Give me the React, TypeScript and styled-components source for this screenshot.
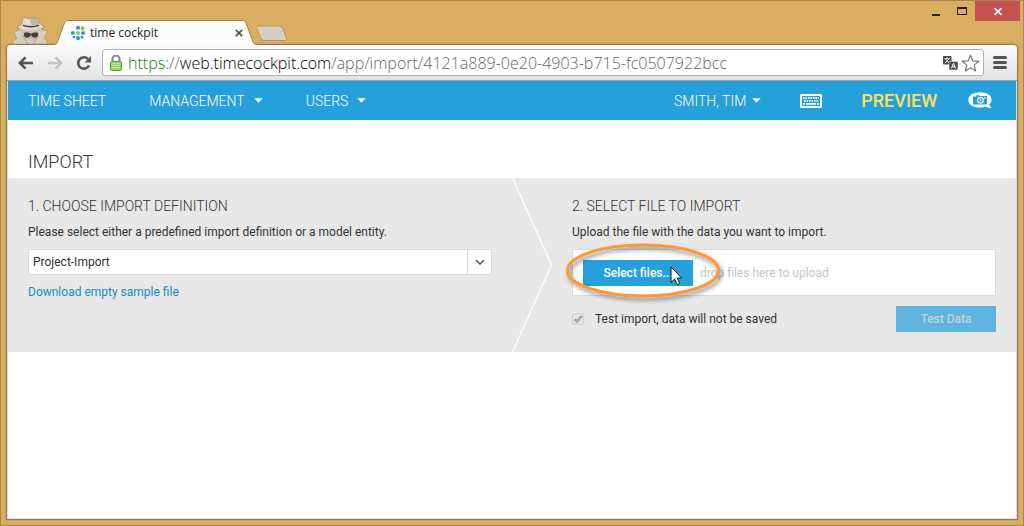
import React from "react";
import styled, { createGlobalStyle } from "styled-components";

const GlobalStyle = createGlobalStyle`
  *, *::before, *::after { box-sizing: border-box; }
  body {
    margin: 0;
    background: #d9ae63;
    font-family: Roboto, "Liberation Sans", sans-serif;
    font-size: 12px;
    line-height: 16px;
    color: #333;
  }
  button, select, input { font: inherit; }
  h1, h2, p { margin: 0; }
`;

const blue = "#26a0da";

const BrowserWindow = styled.div`
  display: flex;
  flex-direction: column;
  min-height: 100vh;
  border: 1px solid #a78650;
  background: #d9ae63;
`;

const TabStrip = styled.header`
  display: flex;
  align-items: flex-end;
  height: 44px;
  padding: 0 3px 0 11px;
`;

const Spy = styled.svg`
  display: block;
  flex: none;
  margin-right: 6px;
`;

const Tab = styled.div`
  position: relative;
  z-index: 1;
  display: flex;
  flex: none;
  align-items: center;
  width: 203px;
  height: 25px;
  padding: 0 14px 0 17px;
  font-family: "Open Sans", "Noto Sans", sans-serif;
  color: #222;
`;

const TabShape = styled.svg`
  position: absolute;
  inset: 0;
  z-index: -1;
`;

const TabTitle = styled.span`
  flex: 1;
  padding-left: 5px;
`;

const PlainButton = styled.button`
  display: flex;
  flex: none;
  align-items: center;
  justify-content: center;
  padding: 0;
  border: 0;
  background: none;
  color: inherit;
`;

const NewTab = styled(PlainButton)`
  margin-bottom: 3px;
`;

const WindowControls = styled.div`
  display: flex;
  align-self: flex-start;
  margin-left: auto;
`;

const ControlButton = styled(PlainButton)<{ $close?: boolean }>`
  width: ${(p) => (p.$close ? 45 : 26)}px;
  height: 20px;
  background: ${(p) => (p.$close ? "#c75050" : "transparent")};
`;

const Client = styled.div`
  display: flex;
  flex: 1;
  flex-direction: column;
  margin: 0 6px 6px;
  border-radius: 4px 4px 0 0;
  background: #fff;
  box-shadow: 0 0 0 1px #95774a, 0 0 2px 1px #a5834a;
`;

const Toolbar = styled.div`
  display: flex;
  align-items: center;
  height: 36px;
  padding: 0 10px 0 11px;
  border-bottom: 1px solid #a6a6a6;
  border-radius: 4px 4px 0 0;
  background: linear-gradient(#fbfbfb, #e2e2e2);
`;

const ToolButtons = styled.div`
  display: flex;
  gap: 13px;
  margin-right: 10px;
`;

const Omnibox = styled.div`
  display: flex;
  flex: 1;
  align-items: center;
  min-width: 0;
  height: 27px;
  margin-right: 9px;
  padding: 0 3px 0 7px;
  border: 1px solid #b0b0b0;
  border-radius: 3px;
  background: #fff;
`;

const Url = styled.div`
  flex: 1;
  min-width: 0;
  overflow: hidden;
  padding-left: 6px;
  font-family: "Open Sans", "Noto Sans", sans-serif;
  font-size: 16px;
  font-weight: 300;
  line-height: 24px;
  white-space: nowrap;
  color: #666;
`;

const UrlPart = styled.span<{ $tone: "secure" | "host" }>`
  color: ${(p) => (p.$tone === "secure" ? "#008a08" : "#000")};
`;

const OmniIcons = styled.div`
  display: flex;
  align-items: center;
  gap: 3px;
`;

const Page = styled.div`
  display: flex;
  flex: 1;
  flex-direction: column;
  border: 1px solid #dfe3ea;
  border-top: 0;
`;

const NavBar = styled.nav`
  display: flex;
  align-items: center;
  justify-content: space-between;
  height: 39px;
  padding: 0 24px 0 20px;
  background: ${blue};
  color: #fff;
`;

const NavGroup = styled.div<{ $gap: number }>`
  display: flex;
  align-items: center;
  gap: ${(p) => p.$gap}px;
`;

const NavLink = styled.a<{ $gap?: number }>`
  display: flex;
  align-items: center;
  gap: ${(p) => p.$gap ?? 9}px;
  color: #fff;
  font-size: 14px;
  font-weight: 300;
  text-decoration: none;
`;

const PreviewLink = styled.a`
  margin-right: -8px;
  color: #fbe063;
  font-size: 18px;
  font-weight: 500;
  text-decoration: none;
`;

const PageTitle = styled.h1`
  padding: 32px 20px 6px;
  font-size: 18px;
  font-weight: 300;
  line-height: 20px;
`;

const Steps = styled.main`
  display: flex;
  background: #e8e8e8;
`;

const Step = styled.section<{ $first?: boolean }>`
  flex: ${(p) => (p.$first ? "0 0 50%" : "1")};
  min-width: 0;
  padding: 20px;
`;

const Divider = styled.svg`
  flex: none;
  align-self: stretch;
  width: 40px;
  height: auto;
`;

const StepTitle = styled.h2`
  margin-bottom: 10px;
  font-size: 14px;
  font-weight: 300;
`;

const Hint = styled.p`
  margin-bottom: 9px;
`;

const SelectBox = styled.div`
  display: grid;
  margin-bottom: 9px;
`;

const Select = styled.select`
  grid-area: 1 / 1;
  height: 26px;
  padding: 0 28px 0 4px;
  border: 1px solid #d9d9d9;
  border-radius: 0;
  appearance: none;
  background: #fff;
  color: #333;
`;

const SelectArrow = styled.span`
  display: flex;
  grid-area: 1 / 1;
  align-items: center;
  justify-content: center;
  justify-self: end;
  width: 25px;
  border-left: 1px solid #d9d9d9;
  pointer-events: none;
`;

const TextLink = styled.a`
  color: #2088bf;
  text-decoration: none;
`;

const DropZone = styled.div`
  display: flex;
  align-items: center;
  gap: 7px;
  height: 47px;
  margin-bottom: 10px;
  padding: 0 10px;
  border: 1px solid #dadada;
  background: #fff;
  color: #c4c4c4;
`;

const Highlighted = styled.div`
  position: relative;
  flex: none;
`;

const ActionButton = styled.button<{ $width: number }>`
  display: block;
  width: ${(p) => p.$width}px;
  height: 26px;
  padding: 0;
  border: 0;
  background: ${blue};
  color: #fff;
  font-weight: 500;

  &:disabled {
    background: #60b4df;
    color: #c3d3dc;
  }
`;

const Ring = styled.svg`
  position: absolute;
  top: -20px;
  left: -20px;
  pointer-events: none;
`;

const Pointer = styled.svg`
  position: absolute;
  top: 6px;
  left: 87px;
  pointer-events: none;
`;

const ActionRow = styled.div`
  display: flex;
  align-items: center;
  justify-content: space-between;
`;

const CheckLabel = styled.label`
  display: flex;
  align-items: center;
  gap: 11px;
`;

const CheckBox = styled.input`
  width: 12px;
  height: 12px;
  margin: 0;
  border: 1px solid #cfcfcf;
  border-radius: 2px;
  appearance: none;
  background: #e4e4e4
    url("data:image/svg+xml,%3Csvg xmlns='http://www.w3.org/2000/svg' viewBox='0 0 10 10'%3E%3Cpath d='M1.500 5.200l2.500 2.400L8.700 2' fill='none' stroke='%23a6a6a6' stroke-width='2.600'/%3E%3C/svg%3E")
    center / 10px 10px no-repeat;
`;

const Caret = () => (
  <svg width="9" height="5" viewBox="0 0 9 5" aria-hidden="true">
    <path d="M0.3 0.2h8.4L4.5 4.8z" fill="#fff" />
  </svg>
);

const SpyIcon = () => (
  <Spy width="36" height="28" viewBox="0 0 36 28" aria-hidden="true">
    <path d="M1 28V25.500l4-4L2.500 15 8 12.500 5 10l5.500-3L11.500 1.500l7-.5 8 .5L28 7l4.500 3-3.500 2.500 6 2-3 6.500 3 4.500v2.500z" fill="#d8d0c4" stroke="#a98a56" />
    <path d="M18.500 1l8 .5L28 7l-3 1.500-6-.5z" fill="#bdb5a9" />
    <path d="M11.500 1.500l3.500-.3 3.500 3V8l-8-1z" fill="#e3ddd3" />
    <path d="M5.500 10l5-3c5 2.300 12 2.300 17.500 0l4 3c-8 4-18.500 4-26.500 0z" fill="#dfd8cd" />
    <path d="M11 8.300c5 1.800 11 1.800 16 0" fill="none" stroke="#403b35" strokeWidth="1.300" />
    <path d="M9 12.500c6 1.300 13 1.300 19 0l-2.500 9L18.500 25l-7-3.500z" fill="#c9c1b5" />
    <path d="M12 16c3-.8 5-.3 7 .8 2-1.100 4-1.600 7-.8.5 3.300-.8 4.800-3 4.800s-3-1.300-4-3.100c-1 1.800-2 3.100-4 3.100s-3.500-1.500-3-4.800z" fill="#453f38" />
    <path d="M2.500 15L8.500 12.500l3.500 8 5 7.500H1v-2.500l4-4zM35 14.500l-6.500-2-3 8.500-5.500 7h15v-2.500L32 21z" fill="#d5cdc0" />
    <path d="M10 18l6.500 10M27 18l-6.500 10" stroke="#aba295" />
  </Spy>
);

const Favicon = () => (
  <svg width="14" height="14" viewBox="0 0 14 14" aria-hidden="true">
    <g fill="#2a93cf">
      <rect x="0" y="5.200" width="3.600" height="3.600" rx="1.200" />
      <rect x="5.200" y="10.300" width="3.600" height="3.600" rx="1.200" />
      <rect x="10.300" y="5.200" width="3.600" height="3.600" rx="1.200" />
      <rect x="1.800" y="9.800" width="2.400" height="2.400" rx="0.800" />
      <rect x="5.200" y="0" width="3.600" height="3.600" rx="1.200" />
      <rect x="9.700" y="9.800" width="2.600" height="2.600" rx="0.800" />
    </g>
    <g fill="#7ac943">
      <rect x="9.800" y="0.600" width="3.600" height="3.600" rx="1.200" />
      <rect x="5.200" y="5.200" width="3.600" height="3.600" rx="1.200" />
    </g>
  </svg>
);

const Keyboard = () => (
  <svg width="22" height="14" viewBox="0 0 22 14" aria-hidden="true">
    <rect width="22" height="14" rx="1.500" fill="#fff" />
    <rect x="2" y="2" width="18" height="10" fill={blue} />
    <path d="M3 4h16M4 6.800h15" stroke="#fff" strokeWidth="1.800" strokeDasharray="1.600 0.900" />
    <path d="M3 9.800h2M6 9.800h10M17 9.800h2" stroke="#fff" strokeWidth="1.800" />
  </svg>
);

const Camera = () => (
  <svg width="24" height="17" viewBox="0 0 24 17" aria-hidden="true">
    <path d="M12 0.300C18.500 0.300 23.500 3 23.500 7.800c0 2-.8 3.400-2.300 4.800.3 1.400 1.300 2.300 2.500 3.400-2.300.3-4.300-.4-5.700-1.400-1.800.6-3.800.9-6 .9C5.300 15.500.4 12.600.4 7.900S5.300.3 12 .3z" fill="#fff" />
    <path d="M5 4.500h3l.8-1.500h2l.8 1h7.400v8.500H5z" fill={blue} />
    <circle cx="12.500" cy="8.200" r="3.400" fill="#fff" />
    <circle cx="12.500" cy="8.200" r="2.200" fill={blue} />
    <circle cx="12.500" cy="8.200" r="1" fill="#fff" />
    <rect x="16.500" y="5" width="1.500" height="1.500" fill="#fff" />
  </svg>
);

export default function App() {
  return (
    <>
      <GlobalStyle />
      <BrowserWindow>
        <TabStrip>
          <SpyIcon />
          <Tab>
            <TabShape width="203" height="25" viewBox="0 0 203 25" aria-hidden="true">
              <path d="M0 25V24.500C2 24.500 2.800 23.500 3.500 22L10 4C11 1.500 12 .5 14.500.5H188C190.500.5 191.500 1.500 192.500 4L199 22C199.700 23.500 200.500 24.500 203 24.500V25z" fill="#fcfcfc" />
              <path d="M0 24.500C2 24.500 2.800 23.500 3.500 22L10 4C11 1.500 12 .5 14.500.5H188C190.500.5 191.500 1.500 192.500 4L199 22C199.700 23.500 200.500 24.500 203 24.500" fill="none" stroke="#a08049" />
            </TabShape>
            <Favicon />
            <TabTitle>time cockpit</TabTitle>
            <PlainButton aria-label="Close tab">
              <svg width="8" height="8" viewBox="0 0 8 8">
                <path d="M0.800 0.800l6.400 6.400M7.200 0.800L0.800 7.200" stroke="#555" strokeWidth="1.800" />
              </svg>
            </PlainButton>
          </Tab>
          <NewTab aria-label="New tab">
            <svg width="32" height="17" viewBox="0 0 32 17">
              <path d="M1 1h21.500q2 0 3 2l4 10q.8 2.500-1 2.500H7q-2 0-3-2L-.4 3Q-1 1 1 1z" fill="#d3cfc2" stroke="#b5955b" />
            </svg>
          </NewTab>
          <WindowControls>
            <ControlButton aria-label="Minimize">
              <svg width="8" height="16" viewBox="0 0 8 16">
                <path d="M0 12h8" stroke="#222" strokeWidth="2" />
              </svg>
            </ControlButton>
            <ControlButton aria-label="Maximize">
              <svg width="10" height="8" viewBox="0 0 10 8">
                <path d="M0.500 1v6.500h9V1" fill="none" stroke="#222" />
                <path d="M0 1h10" stroke="#222" strokeWidth="2" />
              </svg>
            </ControlButton>
            <ControlButton $close aria-label="Close">
              <svg width="8" height="7" viewBox="0 0 8 7">
                <path d="M0.500 0l7 7M7.500 0l-7 7" stroke="#fff" strokeWidth="1.700" />
              </svg>
            </ControlButton>
          </WindowControls>
        </TabStrip>

        <Client>
          <Toolbar>
            <ToolButtons>
              <PlainButton aria-label="Back">
                <svg width="16" height="14" viewBox="0 0 16 14">
                  <path d="M15 7H2.500M7.500 1.300L1.800 7l5.700 5.700" fill="none" stroke="#555" strokeWidth="2.600" />
                </svg>
              </PlainButton>
              <PlainButton aria-label="Forward">
                <svg width="16" height="14" viewBox="0 0 16 14">
                  <path d="M1 7h12.500M8.500 1.300L14.200 7l-5.700 5.700" fill="none" stroke="#c3c3c3" strokeWidth="2.600" />
                </svg>
              </PlainButton>
              <PlainButton aria-label="Reload">
                <svg width="16" height="16" viewBox="0 0 16 16">
                  <path d="M12 4A5.700 5.700 0 1 0 13 10.500" fill="none" stroke="#555" strokeWidth="2.600" />
                  <path d="M15 1v6.500H8.500z" fill="#555" />
                </svg>
              </PlainButton>
            </ToolButtons>
            <Omnibox>
              <svg width="12" height="16" viewBox="0 0 12 16" aria-hidden="true">
                <path d="M2.500 7V4a3.500 3.500 0 0 1 7 0v3" fill="none" stroke="#8a8a8a" strokeWidth="2" />
                <rect x="0.500" y="6.500" width="11" height="9" rx="1" fill="#8fd768" stroke="#5a9e3a" />
                <path d="M2 8.500h8M2 10.500h8M2 12.500h8" stroke="#b2e892" />
              </svg>
              <Url>
                <UrlPart $tone="secure">https</UrlPart>://<UrlPart $tone="host">web.timecockpit.com</UrlPart>
                /app/import/4121a889-0e20-4903-b715-fc0507922bcc
              </Url>
              <OmniIcons>
                <PlainButton aria-label="Translate">
                  <svg width="15" height="14" viewBox="0 0 15 14">
                    <rect width="8.500" height="8.500" rx="1" fill="#4d4d4d" />
                    <path d="M1.500 2.700h5.500M4.200 1.300v1.400M2.500 3l3.800 4M6 3L2 7" fill="none" stroke="#fff" strokeWidth="0.900" />
                    <rect x="6" y="5.500" width="9" height="8.500" rx="1" fill="#4d4d4d" stroke="#fff" strokeWidth="0.500" />
                    <path d="M8.500 12.300l2-5 2 5M9.200 10.800h2.600" fill="none" stroke="#fff" />
                  </svg>
                </PlainButton>
                <PlainButton aria-label="Bookmark">
                  <svg width="19" height="18" viewBox="0 0 19 18">
                    <path d="M9.500 1.200l2.300 5.600 6 .4-4.600 3.900 1.500 5.900-5.200-3.200L4.300 17l1.500-5.900L1.200 7.200l6-.4z" fill="#fff" stroke="#777" strokeWidth="1.200" strokeLinejoin="round" />
                  </svg>
                </PlainButton>
              </OmniIcons>
            </Omnibox>
            <PlainButton aria-label="Menu">
              <svg width="14" height="13" viewBox="0 0 14 13">
                <path d="M1.500 1.500h11M1.500 6.500h11M1.500 11.500h11" stroke="#555" strokeWidth="3" strokeLinecap="round" />
              </svg>
            </PlainButton>
          </Toolbar>

          <Page>
            <NavBar>
              <NavGroup $gap={43}>
                <NavLink href="#timesheet">TIME SHEET</NavLink>
                <NavLink href="#management">MANAGEMENT <Caret /></NavLink>
                <NavLink href="#users">USERS <Caret /></NavLink>
              </NavGroup>
              <NavGroup $gap={39}>
                <NavLink href="#account" $gap={6}>SMITH, TIM <Caret /></NavLink>
                <NavLink href="#shortcuts" aria-label="Keyboard shortcuts"><Keyboard /></NavLink>
                <PreviewLink href="#preview">PREVIEW</PreviewLink>
                <NavLink href="#feedback" aria-label="Feedback"><Camera /></NavLink>
              </NavGroup>
            </NavBar>

            <PageTitle>IMPORT</PageTitle>

            <Steps>
              <Step $first>
                <StepTitle>1. CHOOSE IMPORT DEFINITION</StepTitle>
                <Hint>Please select either a predefined import definition or a model entity.</Hint>
                <SelectBox>
                  <Select aria-label="Import definition" defaultValue="project">
                    <option value="project">Project-Import</option>
                  </Select>
                  <SelectArrow>
                    <svg width="10" height="6" viewBox="0 0 10 6" aria-hidden="true">
                      <path d="M1 1l4 4 4-4" fill="none" stroke="#555" strokeWidth="1.500" />
                    </svg>
                  </SelectArrow>
                </SelectBox>
                <TextLink href="#sample">Download empty sample file</TextLink>
              </Step>
              <Divider viewBox="0 0 40 174" preserveAspectRatio="none" aria-hidden="true">
                <path d="M0.500 0L39.500 87L0.500 174" fill="none" stroke="#fff" strokeWidth="1.200" />
              </Divider>
              <Step>
                <StepTitle>2. SELECT FILE TO IMPORT</StepTitle>
                <Hint>Upload the file with the data you want to import.</Hint>
                <DropZone>
                  <Highlighted>
                    <ActionButton $width={110}>Select files...</ActionButton>
                    <Ring width="170" height="66" viewBox="0 0 170 66" aria-hidden="true">
                      <defs>
                        <filter id="ringShadow" x="-10%" y="-20%" width="120%" height="150%">
                          <feDropShadow dx="2" dy="3" stdDeviation="2" floodColor="#000" floodOpacity="0.450" />
                        </filter>
                      </defs>
                      <ellipse cx="80" cy="30.500" rx="75.500" ry="25.500" fill="none" stroke="#fb9937" strokeWidth="3.200" filter="url(#ringShadow)" />
                    </Ring>
                    <Pointer width="13" height="20" viewBox="0 0 13 20" aria-hidden="true">
                      <path d="M1 1v15.500l3.600-3.400 2.600 5.700 2.600-1.200-2.600-5.500h4.600z" fill="#fff" stroke="#111" />
                    </Pointer>
                  </Highlighted>
                  <span>drop files here to upload</span>
                </DropZone>
                <ActionRow>
                  <CheckLabel>
                    <CheckBox type="checkbox" defaultChecked disabled />
                    Test import, data will not be saved
                  </CheckLabel>
                  <ActionButton $width={100} disabled>Test Data</ActionButton>
                </ActionRow>
              </Step>
            </Steps>
          </Page>
        </Client>
      </BrowserWindow>
    </>
  );
}
